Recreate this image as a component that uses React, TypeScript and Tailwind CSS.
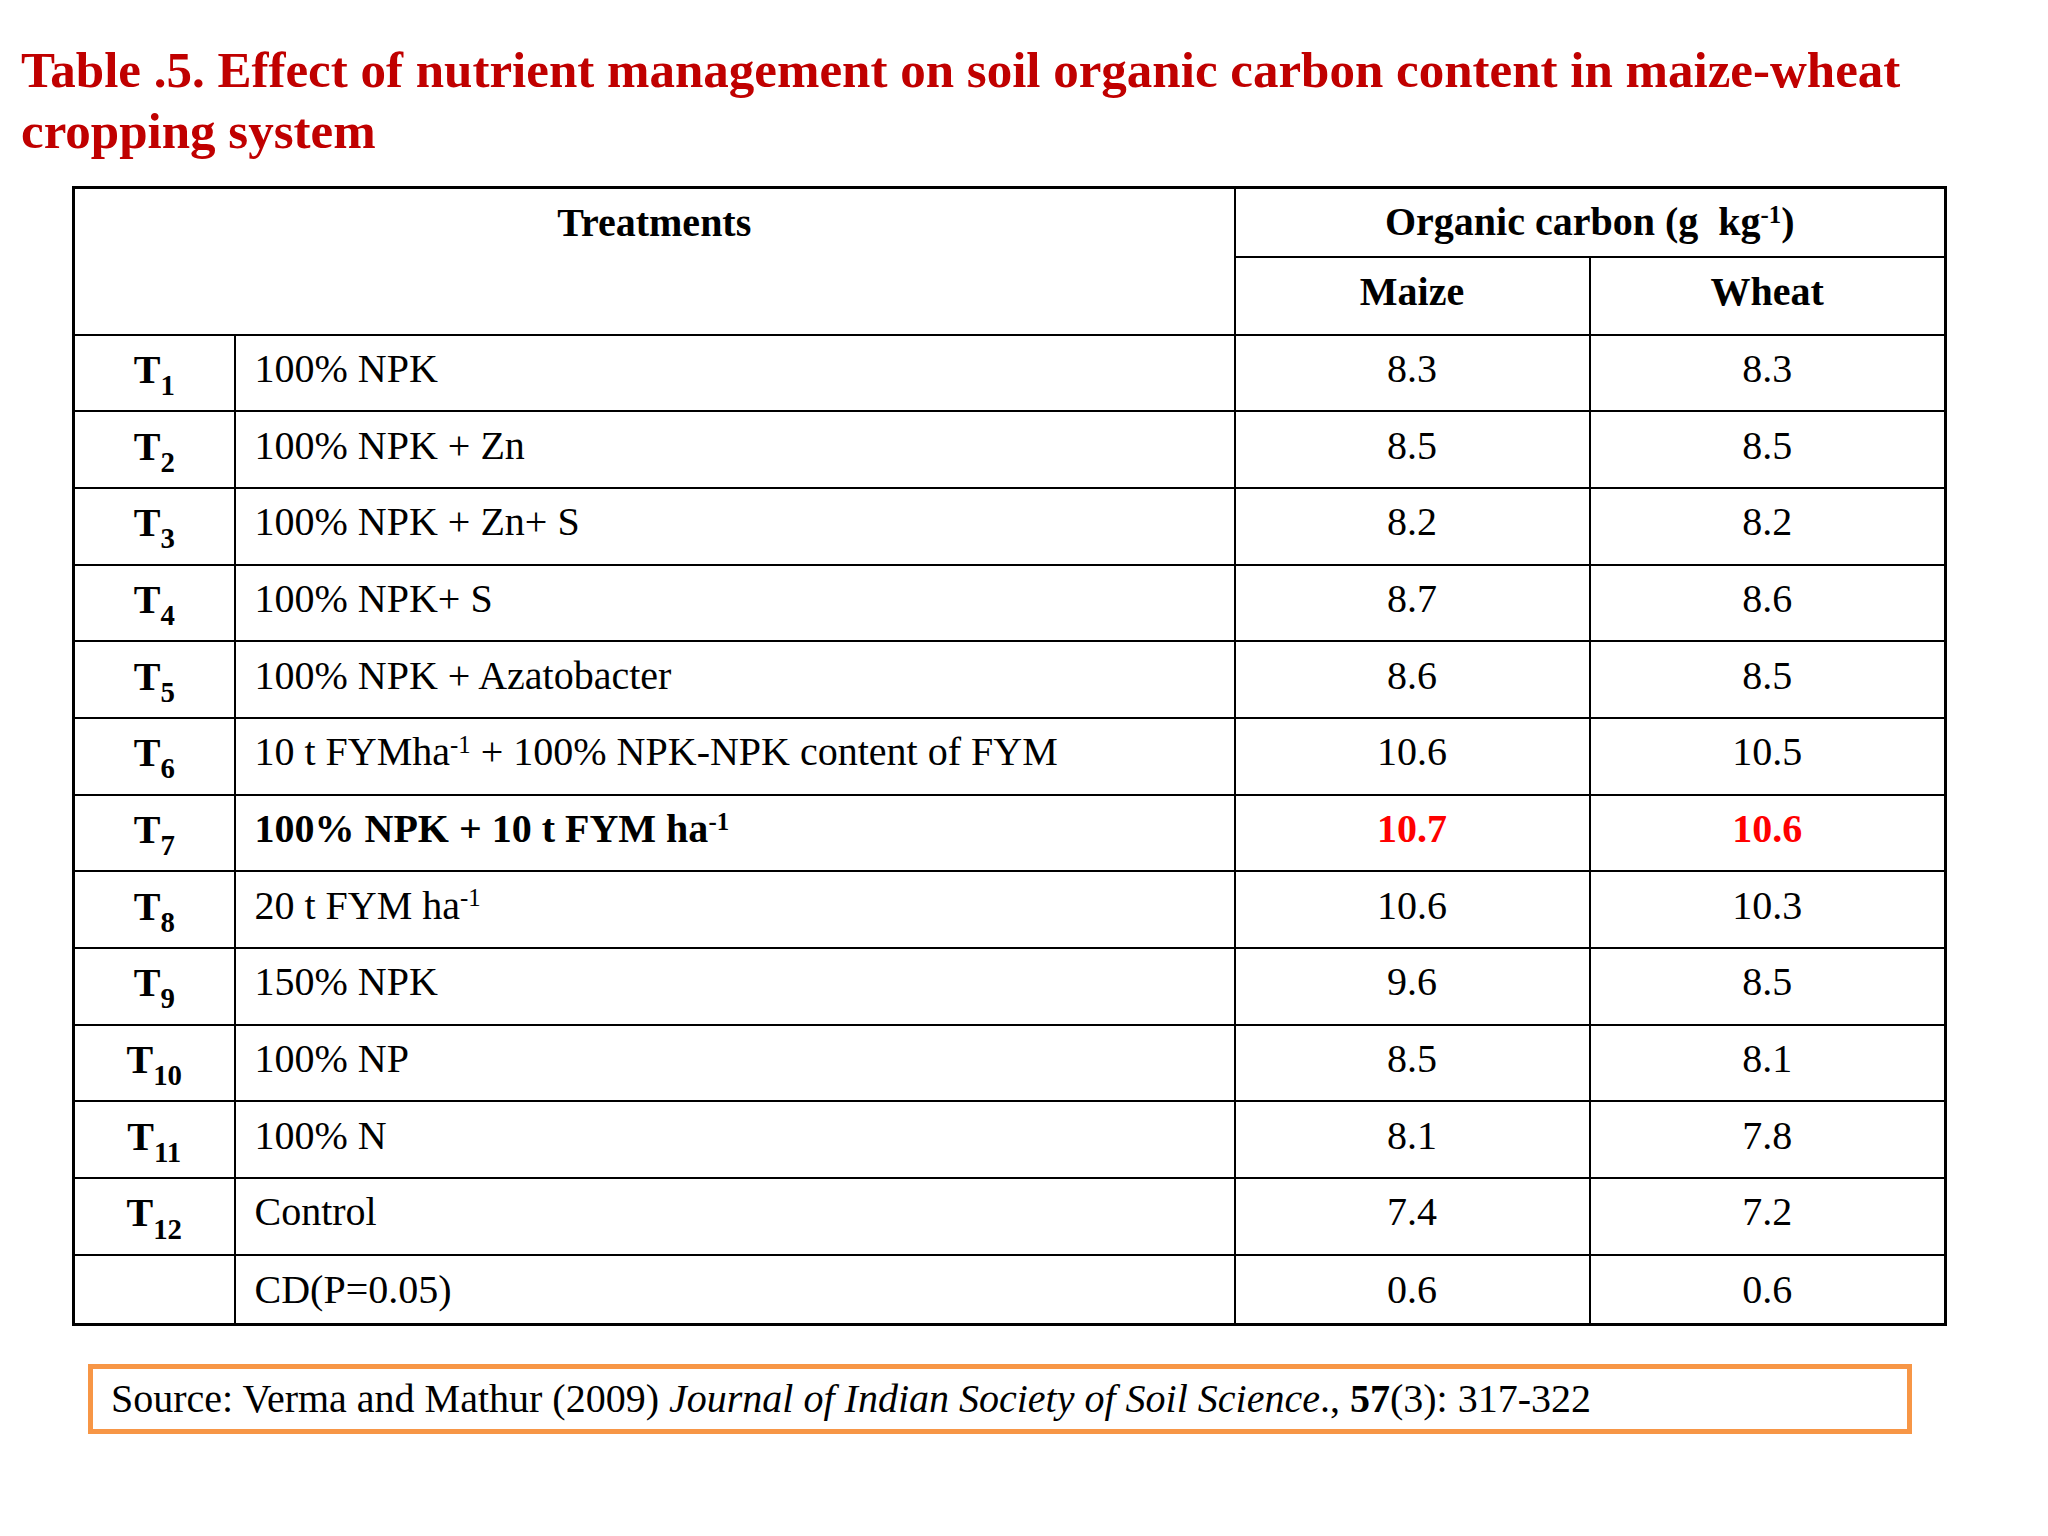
import type { ReactNode } from 'react';

type Row = {
  t?: string;
  label: ReactNode;
  maize: string;
  wheat: string;
  strong?: boolean;
};

const Sup = ({ children }: { children: ReactNode }) => (
  <sup className="text-[0.62em]">{children}</sup>
);

const rows: Row[] = [
  { t: '1', label: '100% NPK', maize: '8.3', wheat: '8.3' },
  { t: '2', label: '100% NPK + Zn', maize: '8.5', wheat: '8.5' },
  { t: '3', label: '100% NPK + Zn+ S', maize: '8.2', wheat: '8.2' },
  { t: '4', label: '100% NPK+ S', maize: '8.7', wheat: '8.6' },
  { t: '5', label: '100% NPK + Azatobacter', maize: '8.6', wheat: '8.5' },
  {
    t: '6',
    label: (
      <>
        10 t FYMha<Sup>-1</Sup> + 100% NPK-NPK content of FYM
      </>
    ),
    maize: '10.6',
    wheat: '10.5',
  },
  {
    t: '7',
    label: (
      <>
        100% NPK + 10 t FYM ha<Sup>-1</Sup>
      </>
    ),
    maize: '10.7',
    wheat: '10.6',
    strong: true,
  },
  {
    t: '8',
    label: (
      <>
        20 t FYM ha<Sup>-1</Sup>
      </>
    ),
    maize: '10.6',
    wheat: '10.3',
  },
  { t: '9', label: '150% NPK', maize: '9.6', wheat: '8.5' },
  { t: '10', label: '100% NP', maize: '8.5', wheat: '8.1' },
  { t: '11', label: '100% N', maize: '8.1', wheat: '7.8' },
  { t: '12', label: 'Control', maize: '7.4', wheat: '7.2' },
];

export default function App() {
  return (
    <div
      className="min-h-screen w-[2048px] bg-white text-black"
      style={{ fontFamily: '"Liberation Serif", "Times New Roman", serif' }}
    >
      <h1 className="pl-[21px] pt-[40px] pr-[100px] text-[51px] font-bold leading-[61px] text-[#c00000]">
        Table .5. Effect of nutrient management on soil organic carbon content in maize-wheat cropping system
      </h1>

      <table className="ml-[72px] mt-[24px] w-[1872px] table-fixed border-collapse border-[3px] border-black text-[40px] leading-[1.15]">
        <colgroup>
          <col className="w-[161px]" />
          <col className="w-[1000px]" />
          <col className="w-[355px]" />
          <col className="w-[356px]" />
        </colgroup>
        <thead>
          <tr className="h-[69px]">
            <th
              colSpan={2}
              rowSpan={2}
              className="border-2 border-black pt-[11px] align-top font-bold"
            >
              Treatments
            </th>
            <th colSpan={2} className="border-2 border-black font-bold">
              Organic carbon (g&nbsp; kg<Sup>-1</Sup>)
            </th>
          </tr>
          <tr className="h-[78px]">
            <th className="border-2 border-black pb-[8px] font-bold">Maize</th>
            <th className="border-2 border-black pb-[8px] font-bold">Wheat</th>
          </tr>
        </thead>
        <tbody>
          {rows.map((r) => (
            <tr key={r.t} className="h-[76.7px]">
              <td className="border-2 border-black pb-[6px] text-center font-bold">
                T<sub className="relative -bottom-[0.42em] text-[0.72em]">{r.t}</sub>
              </td>
              <td className={`border-2 border-black pb-[8px] pl-[19px] ${r.strong ? 'font-bold' : ''}`}>
                {r.label}
              </td>
              <td className={`border-2 border-black pb-[8px] text-center ${r.strong ? 'font-bold text-[#ff0000]' : ''}`}>
                {r.maize}
              </td>
              <td className={`border-2 border-black pb-[8px] text-center ${r.strong ? 'font-bold text-[#ff0000]' : ''}`}>
                {r.wheat}
              </td>
            </tr>
          ))}
          <tr className="h-[70px]">
            <td className="border-2 border-black" />
            <td className="border-2 border-black pl-[19px]">CD(P=0.05)</td>
            <td className="border-2 border-black text-center">0.6</td>
            <td className="border-2 border-black text-center">0.6</td>
          </tr>
        </tbody>
      </table>

      <div className="ml-[88px] mt-[38px] flex h-[70px] w-[1824px] items-center border-[5px] border-[#f79646] pl-[18px] text-[40px]">
        <span>
          Source: Verma and Mathur (2009) <i>Journal of Indian Society of Soil Science</i>., <b>57</b>(3): 317-322
        </span>
      </div>
    </div>
  );
}
